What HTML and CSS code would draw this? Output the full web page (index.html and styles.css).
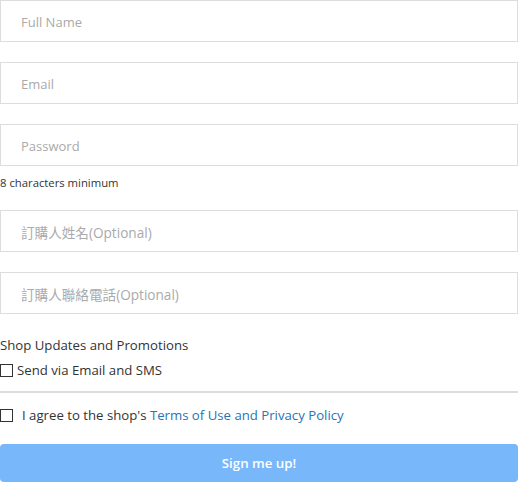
FILE: index.html
```html
<!DOCTYPE html>
<html lang="en">
<head>
<meta charset="utf-8">
<link rel="stylesheet" href="styles.css">
</head>
<body>
<form class="signup">
  <div class="field"><input class="input" type="text" placeholder="Full Name"></div>
  <div class="field"><input class="input" type="email" placeholder="Email"></div>
  <div class="field">
    <input class="input" type="password" placeholder="Password">
    <div class="hint">8 characters minimum</div>
  </div>
  <div class="field"><input class="input input-cjk" type="text" placeholder="訂購人姓名(Optional)"></div>
  <div class="field"><input class="input input-cjk" type="text" placeholder="訂購人聯絡電話(Optional)"></div>
  <div class="updates">
    <div class="updates-title">Shop Updates and Promotions</div>
    <label class="check-row"><span class="box"></span>Send via Email and SMS</label>
  </div>
  <div class="divider"></div>
  <label class="agree-row"><span class="box"></span><span class="agree-text">I agree to the shop's <a class="link">Terms of Use and Privacy Policy</a></span></label>
  <button class="submit" type="button">Sign me up!</button>
</form>
</body>
</html>
```
FILE: styles.css
```css
* { box-sizing: border-box; }
html, body { margin: 0; padding: 0; background: #fff; }
body {
  font-family: "Open Sans", "Noto Sans CJK TC", sans-serif;
  color: #333;
  width: 518px;
}
.signup { display: flex; flex-direction: column; }
.field { margin-bottom: 20px; }
.input {
  display: block;
  width: 100%;
  height: 42px;
  border: 1px solid #ddd;
  border-radius: 0;
  padding: 2px 20px 0;
  font-family: "Open Sans", "Noto Sans CJK TC", sans-serif;
  font-size: 13px;
  outline: none;
  background: #fff;
}
.input-cjk { font-size: 13.6px; }
.input::placeholder { color: #aaa; }
.hint { font-size: 11.3px; color: #333; margin-top: 9px; line-height: 15px; }
.updates { margin-top: 1px; }
.updates-title { font-size: 13.2px; line-height: 20px; color: #333; }
.check-row { display: flex; align-items: center; font-size: 13.2px; line-height: 20px; margin-top: 5px; color: #333; }
.box { width: 13px; height: 13px; border: 1px solid #333; display: inline-block; flex: none; }
.check-row .box { margin-right: 4px; }
.divider { height: 2px; background: #ddd; margin-top: 11px; }
.agree-row { display: flex; align-items: center; font-size: 13.2px; line-height: 20px; margin-top: 12px; color: #333; }
.agree-row .box { margin-right: 9px; }
.link { color: #2a73b5; text-decoration: none; }
.submit {
  margin-top: 19px;
  height: 38px;
  border: none;
  border-radius: 4px;
  background: #77b7fa;
  color: #fff;
  font-family: "Open Sans", sans-serif;
  font-weight: 600;
  font-size: 13.3px;
  width: 100%;
}
```
